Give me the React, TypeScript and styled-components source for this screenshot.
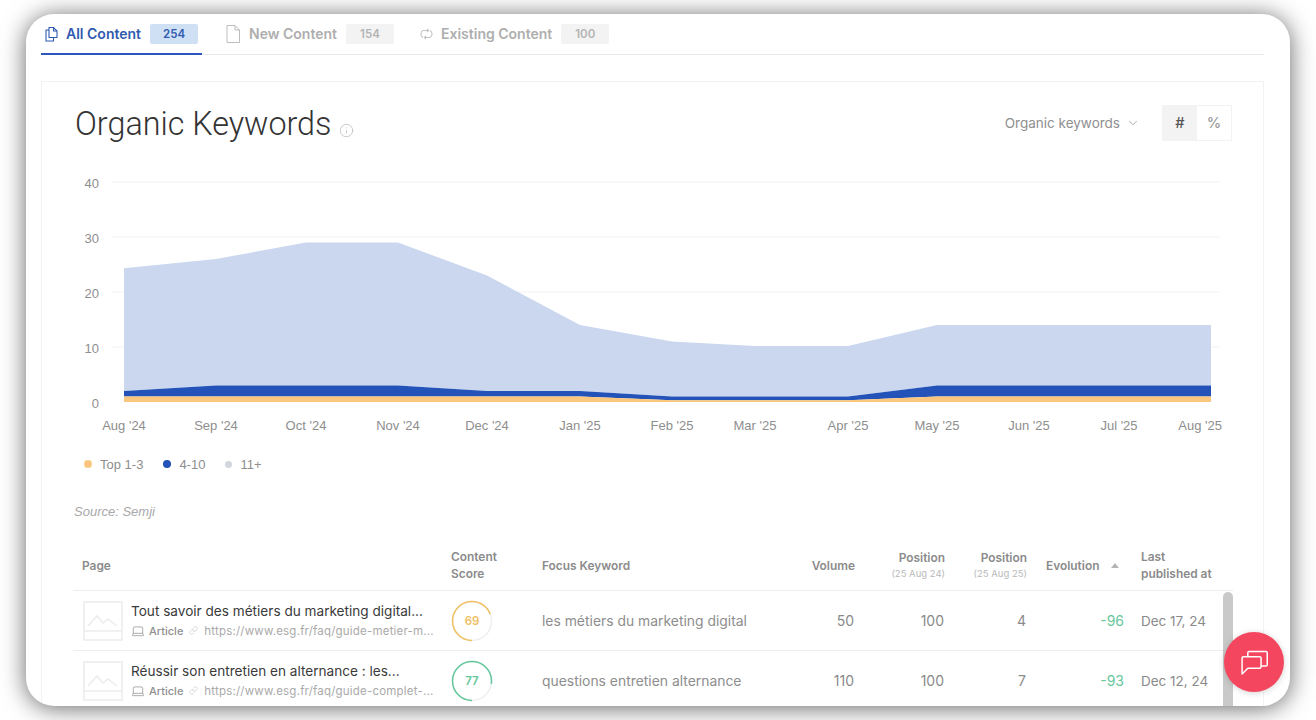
import { FC } from 'react';
import styled, { createGlobalStyle } from 'styled-components';
import { ChevronDown, Info, Laptop, Link } from 'lucide-react';

const GlobalStyle = createGlobalStyle`
	html, body {
		margin: 0;
		height: 100%;
		background: #fff;
		overflow: hidden;
	}
	* {
		box-sizing: border-box;
	}
`;

const Stage = styled.div`
	height: 720px;
	padding: 14px 26px;
	font-family: Inter, 'Noto Sans', sans-serif;
`;

const Frame = styled.main`
	position: relative;
	height: 692px;
	overflow: hidden;
	background: #fff;
	border-radius: 28px;
	box-shadow: 0 2px 24px rgba(0, 0, 0, 0.6);
	padding: 0 26px 0 15px;
`;

const TabBar = styled.nav`
	display: flex;
	height: 41px;
	border-bottom: 1px solid #e9e9e9;
`;

const Tab = styled.div<{ $active?: boolean; $width: number }>`
	display: flex;
	align-items: center;
	width: ${p => p.$width}px;
	height: 41px;
	gap: 6px;
	font-size: 14px;
	font-weight: 600;
	white-space: nowrap;
	color: ${p => (p.$active ? '#2f5bb0' : '#aeaeae')};
	border-bottom: 2px solid ${p => (p.$active ? '#2a56bd' : 'transparent')};
`;

const TabIcon = styled.span<{ $left: number; $right?: number; $width: number }>`
	display: flex;
	justify-content: center;
	width: ${p => p.$width}px;
	margin-left: ${p => p.$left}px;
	margin-right: ${p => p.$right ?? 0}px;
`;

const Count = styled.span<{ $active?: boolean }>`
	display: flex;
	align-items: center;
	justify-content: center;
	flex: none;
	width: 48px;
	height: 20px;
	margin-left: 3px;
	border-radius: 2px;
	font-size: 11.5px;
	font-weight: 600;
	color: ${p => (p.$active ? '#2f5bb0' : '#b4b4b4')};
	background: ${p => (p.$active ? '#cfe0f5' : '#f3f3f3')};
`;

const Card = styled.section`
	margin-top: 26px;
	height: 640px;
	border: 1px solid #f3f3f3;
`;

const CardHead = styled.header`
	display: flex;
	align-items: center;
	height: 83px;
	padding: 0 31px 0 33px;
`;

const Title = styled.h1`
	margin: 0;
	font-family: Roboto, sans-serif;
	font-size: 32.3px;
	font-weight: 300;
	color: #333;
`;

const TitleInfo = styled.span`
	display: flex;
	margin: 13px 0 0 8px;
	color: #bdbdbd;
`;

const Dropdown = styled.div`
	display: flex;
	align-items: center;
	gap: 6px;
	margin: 0 0 2px auto;
	font-size: 13.5px;
	color: #8f8f8f;
`;

const Toggle = styled.div`
	display: flex;
	margin: -2px 0 0 22px;
	border: 1px solid #f3f3f3;
`;

const ToggleItem = styled.div<{ $active?: boolean }>`
	display: flex;
	align-items: center;
	justify-content: center;
	width: 34px;
	height: 34px;
	font-size: 14.5px;
	font-weight: 500;
	color: ${p => (p.$active ? '#555' : '#999')};
	background: ${p => (p.$active ? '#f3f3f3' : '#fff')};
`;

const ChartSvg = styled.svg`
	display: block;
	width: 1221px;
	height: 280px;
`;

const AxisLabel = styled.text`
	font-family: 'Liberation Sans', Arial, sans-serif;
	font-size: 13px;
	fill: #8e8e8e;
`;

const Legend = styled.ul`
	display: flex;
	align-items: center;
	gap: 20px;
	height: 20px;
	margin: 9px 0 0;
	padding: 0 0 0 42px;
	list-style: none;
`;

const LegendItem = styled.li`
	display: flex;
	align-items: center;
	gap: 8px;
	font-family: 'Liberation Sans', Arial, sans-serif;
	font-size: 13px;
	color: #8e8e8e;
`;

const Dot = styled.i<{ $color: string; $size: number }>`
	width: ${p => p.$size}px;
	height: ${p => p.$size}px;
	border-radius: 50%;
	background: ${p => p.$color};
`;

const Source = styled.p`
	margin: 29px 0 0 32px;
	height: 18px;
	font-family: 'Liberation Sans', Arial, sans-serif;
	font-size: 13px;
	line-height: 18px;
	font-style: italic;
	color: #a8a8a8;
`;

const Table = styled.div`
	position: relative;
	margin: 24px 0 0 31px;
	width: 1160px;
`;

const columns = '369px 91px 247px 75px 90px 82px 98px 108px';

const HeadRow = styled.div`
	display: grid;
	grid-template-columns: ${columns};
	align-items: center;
	height: 46px;
	padding-bottom: 5px;
	border-bottom: 1px solid #eeeeee;
	font-size: 11.9px;
	font-weight: 600;
	line-height: 17px;
	color: #8b8b8b;
`;

const HeadCell = styled.div<{ $pad?: number; $right?: boolean }>`
	padding-left: ${p => p.$pad ?? 9}px;
	text-align: ${p => (p.$right ? 'right' : 'left')};
`;

const HeadNote = styled.small`
	display: block;
	font-size: 9.5px;
	font-weight: 400;
	line-height: 15px;
	color: #b9b9b9;
`;

const SortCell = styled.div`
	display: flex;
	align-items: center;
	padding-left: 19px;
`;

const SortArrow = styled.i`
	margin-left: 12px;
	border-left: 4px solid transparent;
	border-right: 4px solid transparent;
	border-bottom: 5px solid #b5b5b5;
`;

const Row = styled.div`
	display: grid;
	grid-template-columns: ${columns};
	align-items: center;
	height: 60px;
	border-bottom: 1px solid #eeeeee;
	font-size: 13px;
	color: #8a8a8a;
`;

const PageCell = styled.div`
	display: flex;
	align-items: center;
	gap: 8px;
	padding-left: 10px;
`;

const PageText = styled.div`
	min-width: 0;
	width: 310px;
`;

const PageTitle = styled.div`
	font-size: 13.6px;
	font-weight: 400;
	line-height: 20px;
	color: #3a3a3a;
	white-space: nowrap;
`;

const PageMeta = styled.div`
	display: flex;
	align-items: center;
	height: 20px;
	font-size: 11px;
	color: #8f8f8f;
`;

const MetaKind = styled.span`
	margin: 0 6px 0 4px;
	font-weight: 500;
`;

const MetaUrl = styled.span`
	margin-left: 6px;
	font-size: 11.5px;
	color: #aaaaaa;
	letter-spacing: 0.2px;
	white-space: nowrap;
`;

const ScoreCell = styled.div`
	padding-left: 9px;
`;

const ScoreWrap = styled.div`
	position: relative;
	width: 42px;
	height: 42px;
`;

const ScoreValue = styled.span<{ $color: string }>`
	position: absolute;
	inset: 0;
	display: flex;
	align-items: center;
	justify-content: center;
	font-size: 11.5px;
	font-weight: 600;
	color: ${p => p.$color};
`;

const Keyword = styled.div`
	padding-left: 9px;
	font-size: 13.9px;
	color: #8e8e8e;
	white-space: nowrap;
`;

const NumberCell = styled.div<{ $color?: string }>`
	padding-right: 1px;
	text-align: right;
	font-size: 14px;
	color: ${p => p.$color ?? '#8a8a8a'};
`;

const DateCell = styled.div`
	padding-left: 16px;
	font-size: 13.5px;
	color: #8a8a8a;
	white-space: nowrap;
`;

const Scrollbar = styled.div`
	position: absolute;
	top: 47px;
	left: 1150px;
	width: 10px;
	height: 130px;
	border-radius: 5px 5px 0 0;
	background: #c9c9c9;
`;

const ChatButton = styled.button`
	position: absolute;
	right: 6px;
	bottom: 14px;
	display: flex;
	align-items: center;
	justify-content: center;
	width: 60px;
	height: 60px;
	padding: 0;
	border: none;
	border-radius: 50%;
	background: #f4475f;
	box-shadow: 0 1px 6px rgba(0, 0, 0, 0.18);
`;

// chart data, x in page pixels and series in keyword counts
const CHART_X = [124, 216, 306, 398, 487, 580, 672, 755, 848, 937, 1029, 1119, 1211];
const MONTHS = ["Aug '24", "Sep '24", "Oct '24", "Nov '24", "Dec '24", "Jan '25", "Feb '25", "Mar '25", "Apr '25", "May '25", "Jun '25", "Jul '25", "Aug '25"];
const TOP = [1, 1, 1, 1, 1, 1, 0.3, 0.3, 0.3, 1, 1, 1, 1];
const MID = [2, 3, 3, 3, 2, 2, 1, 1, 1, 3, 3, 3, 3];
const ALL = [24.3, 26, 29, 29, 23, 14, 11, 10.2, 10.2, 14, 14, 14, 14];

const toY = (v: number) => 402 - v * 5.5;

const band = (upper: number[], lower: number[]) => {
	const top = upper.map((v, i) => `${CHART_X[i]},${toY(v)}`);
	const bottom = lower.map((v, i) => `${CHART_X[i]},${toY(v)}`).reverse();
	return [...top, ...bottom].join(' ');
};

const ZERO = CHART_X.map(() => 0);

const Chart: FC = () => (
	<ChartSvg viewBox="42 165 1221 280">
		{[0, 10, 20, 30, 40].map(v => (
			<g key={v}>
				{v > 0 && <line x1={112} x2={1220} y1={toY(v)} y2={toY(v)} stroke="#f3f3f3" strokeWidth={1} />}
				<AxisLabel x={99} y={toY(v) + 5.5} textAnchor="end">
					{v}
				</AxisLabel>
			</g>
		))}
		<polygon points={band(ALL, MID)} fill="#cbd7ef" />
		<polygon points={band(MID, TOP)} fill="#2353b8" />
		<polygon points={band(TOP, ZERO)} fill="#fbc77f" />
		{MONTHS.map((m, i) => (
			// the last label is pulled back so it stays inside the plot
			<AxisLabel
				key={i}
				x={i === MONTHS.length - 1 ? 1222 : CHART_X[i]}
				y={430}
				textAnchor={i === MONTHS.length - 1 ? 'end' : 'middle'}
			>
				{m}
			</AxisLabel>
		))}
	</ChartSvg>
);

const AllContentIcon: FC = () => (
	<svg width="15" height="16" viewBox="0 0 15 16" fill="none" stroke="#2f5bb0" strokeWidth="1.1">
		<path d="M5 1.5h4.5l3.5 3.5v6.5H5z" />
		<path d="M9.5 1.5V5H13" />
		<path d="M5 4H2v11h7.5v-3.5" />
	</svg>
);

const NewContentIcon: FC = () => (
	<svg width="14" height="18" viewBox="0 0 14 18" fill="none" stroke="#bdbdbd" strokeWidth="1">
		<path d="M1 .5h8L13.5 5v12.5H1z" />
		<path d="M9 .5V5h4.5" />
	</svg>
);

const ExistingContentIcon: FC = () => (
	<svg width="13" height="12" viewBox="0 0 13 12" fill="none" stroke="#c4c4c4" strokeWidth="1.1">
		<path d="M3 9.5a4 4 0 0 1 0-7h5" />
		<path d="M10 2.5a4 4 0 0 1 0 7H5" />
		<path d="M7 .8l1.6 1.7L7 4.2M6 7.8L4.4 9.5 6 11.2" />
	</svg>
);

const ChatIcon: FC = () => (
	<svg width="30" height="30" viewBox="0 0 34 34" fill="none" stroke="#fff" strokeWidth="1.7" strokeLinejoin="round">
		<path d="M5 11h18.500a1.500 1.500 0 0 1 1.500 1.500v10a1.500 1.500 0 0 1-1.500 1.500H10l-6.500 6.500V12.500A1.500 1.500 0 0 1 5 11z" />
		<path d="M10 11V6.500A1.500 1.500 0 0 1 11.500 5h19A1.500 1.500 0 0 1 32 6.500V20a1.500 1.500 0 0 1-1.500 1.500H25" />
	</svg>
);

const Thumbnail: FC = () => (
	<svg width="40" height="40" viewBox="0 0 40 40" fill="none" stroke="#ececec" strokeWidth="1.5" style={{ flex: 'none' }}>
		<rect x="1" y="1" width="38" height="38" />
		<path d="M1 30h38" />
		<path d="M5 25l9-10 6 7 5-4 9 7" />
	</svg>
);

const ScoreRing: FC<{ score: number; color: string }> = ({ score, color }) => {
	const length = 2 * Math.PI * 19.5;
	return (
		<ScoreWrap>
			<svg width="42" height="42" viewBox="0 0 42 42" fill="none" strokeWidth="1.5">
				<circle cx="21" cy="21" r="19.5" stroke="#efefef" />
				<circle
					cx="21"
					cy="21"
					r="19.5"
					stroke={color}
					strokeDasharray={`${(length * score) / 100} ${length}`}
					transform="rotate(90 21 21)"
				/>
			</svg>
			<ScoreValue $color={color}>{score}</ScoreValue>
		</ScoreWrap>
	);
};

const ROWS = [
	{
		title: 'Tout savoir des métiers du marketing digital...',
		url: 'https://www.esg.fr/faq/guide-metier-m...',
		score: 69,
		color: '#f0c063',
		keyword: 'les métiers du marketing digital',
		volume: 50,
		before: 100,
		after: 4,
		evolution: '-96',
		date: 'Dec 17, 24',
	},
	{
		title: 'Réussir son entretien en alternance : les...',
		url: 'https://www.esg.fr/faq/guide-complet-...',
		score: 77,
		color: '#62c89c',
		keyword: 'questions entretien alternance',
		volume: 110,
		before: 100,
		after: 7,
		evolution: '-93',
		date: 'Dec 12, 24',
	},
];

export default function App() {
	return (
		<Stage>
			<GlobalStyle />
			<Frame>
				<TabBar>
					<Tab $active $width={161}>
						<TabIcon $left={3} $right={1} $width={15}>
							<AllContentIcon />
						</TabIcon>
						All Content
						<Count $active>254</Count>
					</Tab>
					<Tab $width={195}>
						<TabIcon $left={23} $right={3} $width={15}>
							<NewContentIcon />
						</TabIcon>
						New Content
						<Count>154</Count>
					</Tab>
					<Tab $width={200}>
						<TabIcon $left={23} $right={2} $width={15}>
							<ExistingContentIcon />
						</TabIcon>
						Existing Content
						<Count>100</Count>
					</Tab>
				</TabBar>
				<Card>
					<CardHead>
						<Title>Organic Keywords</Title>
						<TitleInfo>
							<Info size={15} strokeWidth={1.25} />
						</TitleInfo>
						<Dropdown>
							Organic keywords
							<ChevronDown size={14} strokeWidth={1.25} />
						</Dropdown>
						<Toggle>
							<ToggleItem $active>#</ToggleItem>
							<ToggleItem>%</ToggleItem>
						</Toggle>
					</CardHead>
					<Chart />
					<Legend>
						<LegendItem>
							<Dot $color="#fbc77f" $size={8} />
							Top 1-3
						</LegendItem>
						<LegendItem>
							<Dot $color="#2353b8" $size={8} />
							4-10
						</LegendItem>
						<LegendItem>
							<Dot $color="#d3d6de" $size={7} />
							11+
						</LegendItem>
					</Legend>
					<Source>Source: Semji</Source>
					<Table>
						<HeadRow>
							<HeadCell>Page</HeadCell>
							<HeadCell>
								Content
								<br />
								Score
							</HeadCell>
							<HeadCell>Focus Keyword</HeadCell>
							<HeadCell $right>Volume</HeadCell>
							<HeadCell $right>
								Position
								<HeadNote>(25 Aug 24)</HeadNote>
							</HeadCell>
							<HeadCell $right>
								Position
								<HeadNote>(25 Aug 25)</HeadNote>
							</HeadCell>
							<SortCell>
								Evolution
								<SortArrow />
							</SortCell>
							<HeadCell $pad={16}>
								Last
								<br />
								published at
							</HeadCell>
						</HeadRow>
						{ROWS.map(row => (
							<Row key={row.url}>
								<PageCell>
									<Thumbnail />
									<PageText>
										<PageTitle>{row.title}</PageTitle>
										<PageMeta>
											<Laptop size={14} strokeWidth={1.25} />
											<MetaKind>Article</MetaKind>
											<Link size={9} strokeWidth={1.25} color="#b5b5b5" />
											<MetaUrl>{row.url}</MetaUrl>
										</PageMeta>
									</PageText>
								</PageCell>
								<ScoreCell>
									<ScoreRing score={row.score} color={row.color} />
								</ScoreCell>
								<Keyword>{row.keyword}</Keyword>
								<NumberCell>{row.volume}</NumberCell>
								<NumberCell>{row.before}</NumberCell>
								<NumberCell>{row.after}</NumberCell>
								<NumberCell $color="#68c79d">{row.evolution}</NumberCell>
								<DateCell>{row.date}</DateCell>
							</Row>
						))}
						<Scrollbar />
					</Table>
				</Card>
				<ChatButton aria-label="Chat">
					<ChatIcon />
				</ChatButton>
			</Frame>
		</Stage>
	);
}
